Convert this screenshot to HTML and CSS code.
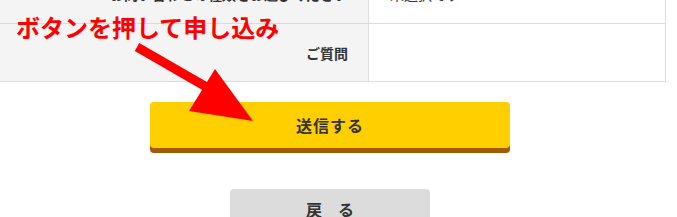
FILE: index.html
```html
<!DOCTYPE html>
<html lang="ja">
<head>
<meta charset="utf-8">
<link rel="stylesheet" href="styles.css">
</head>
<body>
<div class="page">
  <div class="form-table">
    <div class="row">
      <div class="label label-first">お問い合わせの種類をお選びください</div>
      <div class="value value-first">未選択です</div>
    </div>
    <div class="row">
      <div class="label">ご質問</div>
      <div class="value"></div>
    </div>
  </div>
  <div class="actions">
    <button class="btn-submit" type="button">送信する</button>
    <button class="btn-back" type="button">戻　る</button>
  </div>
  <div class="note">ボタンを押して申し込み</div>
  <svg class="arrow" width="677" height="217" viewBox="0 0 677 217">
    <line x1="137" y1="47" x2="222" y2="96" stroke="#ff0000" stroke-width="9"/>
    <polygon points="215,69 189,111 253,121" fill="#ff0000"/>
  </svg>
</div>
</body>
</html>
```
FILE: styles.css
```css
* { box-sizing: border-box; }
html, body { margin: 0; padding: 0; background: #fff; overflow: hidden; }
body {
  font-family: "Noto Sans CJK JP", "Noto Sans", sans-serif;
  color: #333;
}
.page { position: relative; width: 677px; height: 217px; overflow: hidden; }
.form-table {
  margin-top: -33px;
  margin-left: -10px;
  width: 676px;
  border: 1px solid #ddd;
  border-top: 0;
}
.row {
  display: flex;
  height: 57px;
  border-bottom: 1px solid #ddd;
}
.row:last-child { border-bottom: 0; height: 57px; }
.label {
  width: 378px;
  background: #f4f4f4;
  border-right: 1px solid #ddd;
  display: flex;
  align-items: center;
  justify-content: flex-end;
  padding-right: 20px;
  font-size: 14px;
  font-weight: bold;
}
.value {
  flex: 1;
  display: flex;
  align-items: center;
  padding-left: 21px;
  font-size: 14px;
}
.label-first, .value-first { padding-bottom: 2px; }
.actions {
  display: flex;
  flex-direction: column;
  align-items: center;
  padding-top: 20px;
  padding-right: 17px;
}
.btn-submit {
  width: 360px;
  height: 46px;
  border: 0;
  border-radius: 4px;
  background: #ffcf00;
  box-shadow: 0 5px 0 #a35b00;
  font-family: inherit;
  font-size: 16px;
  font-weight: bold;
  color: #333;
  letter-spacing: 1px;
}
.btn-back {
  margin-top: 41px;
  width: 200px;
  height: 46px;
  border: 0;
  border-radius: 4px;
  background: #dcdcdc;
  font-family: inherit;
  font-size: 16px;
  font-weight: bold;
  color: #333;
  padding-bottom: 7px;
}
.note {
  position: absolute;
  left: 16px;
  top: 12px;
  font-size: 24px;
  font-weight: bold;
  color: #ff0000;
  line-height: 30px;
  white-space: nowrap;
}
.arrow { position: absolute; left: 0; top: 0; }
```
